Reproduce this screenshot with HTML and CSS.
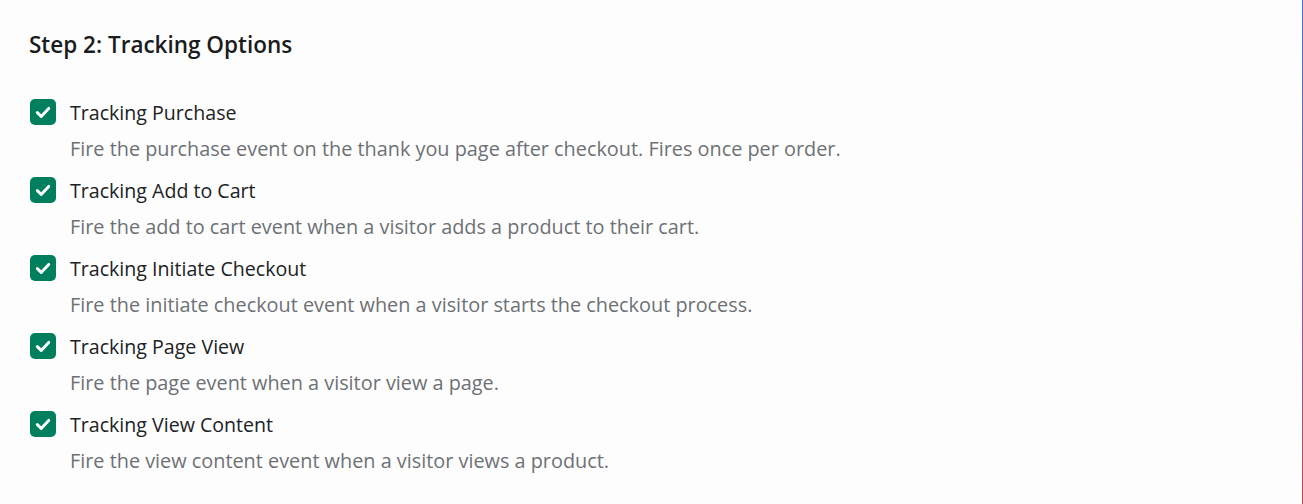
FILE: index.html
```html
<!DOCTYPE html>
<html lang="en">
<head>
<meta charset="utf-8">
<title>Tracking Options</title>
<link rel="stylesheet" href="styles.css">
</head>
<body>
<div class="page">
  <main class="content">
    <h2 class="title">Step 2: Tracking Options</h2>
    <ul class="options">
      <li class="option">
        <div class="row">
          <span class="check"><svg viewBox="0 0 26 26" width="26" height="26"><path d="M7.3 13.6l3.9 3.8 7.5-8" fill="none" stroke="#fff" stroke-width="2.9" stroke-linecap="round" stroke-linejoin="round"/></svg></span>
          <span class="label">Tracking Purchase</span>
        </div>
        <p class="desc">Fire the purchase event on the thank you page after checkout. Fires once per order.</p>
      </li>
      <li class="option">
        <div class="row">
          <span class="check"><svg viewBox="0 0 26 26" width="26" height="26"><path d="M7.3 13.6l3.9 3.8 7.5-8" fill="none" stroke="#fff" stroke-width="2.9" stroke-linecap="round" stroke-linejoin="round"/></svg></span>
          <span class="label">Tracking Add to Cart</span>
        </div>
        <p class="desc">Fire the add to cart event when a visitor adds a product to their cart.</p>
      </li>
      <li class="option">
        <div class="row">
          <span class="check"><svg viewBox="0 0 26 26" width="26" height="26"><path d="M7.3 13.6l3.9 3.8 7.5-8" fill="none" stroke="#fff" stroke-width="2.9" stroke-linecap="round" stroke-linejoin="round"/></svg></span>
          <span class="label">Tracking Initiate Checkout</span>
        </div>
        <p class="desc">Fire the initiate checkout event when a visitor starts the checkout process.</p>
      </li>
      <li class="option">
        <div class="row">
          <span class="check"><svg viewBox="0 0 26 26" width="26" height="26"><path d="M7.3 13.6l3.9 3.8 7.5-8" fill="none" stroke="#fff" stroke-width="2.9" stroke-linecap="round" stroke-linejoin="round"/></svg></span>
          <span class="label">Tracking Page View</span>
        </div>
        <p class="desc">Fire the page event when a visitor view a page.</p>
      </li>
      <li class="option">
        <div class="row">
          <span class="check"><svg viewBox="0 0 26 26" width="26" height="26"><path d="M7.3 13.6l3.9 3.8 7.5-8" fill="none" stroke="#fff" stroke-width="2.9" stroke-linecap="round" stroke-linejoin="round"/></svg></span>
          <span class="label">Tracking View Content</span>
        </div>
        <p class="desc">Fire the view content event when a visitor views a product.</p>
      </li>
    </ul>
  </main>
  <div class="edge"></div>
</div>
</body>
</html>
```
FILE: styles.css
```css
* { box-sizing: border-box; }
html, body { margin: 0; padding: 0; }
body {
  background: #fdfdfd;
  font-family: "Open Sans", "Noto Sans", sans-serif;
  color: #202223;
}
.page {
  display: flex;
  min-height: 504px;
}
.content {
  flex: 1;
  padding: 30px 0 0 29px;
}
.edge {
  width: 1px;
  background: linear-gradient(to bottom, #4d6fdc, #8a5fa8 50%, #c8455a);
}
.title {
  margin: 0;
  font-size: 22.5px;
  line-height: 30px;
  font-weight: 600;
  color: #1a1c1d;
}
.options {
  list-style: none;
  margin: 39px 0 0;
  padding: 0 0 0 1px;
  display: flex;
  flex-direction: column;
  gap: 15px;
}
.row {
  display: flex;
  align-items: flex-start;
  height: 26px;
  gap: 14px;
}
.check {
  width: 26px;
  height: 26px;
  border-radius: 5px;
  background: #007f5f;
  display: flex;
}
.label {
  font-size: 19.6px;
  line-height: 24px;
  padding-top: 2px;
  color: #202223;
}
.desc {
  margin: 11px 0 0 40px;
  font-size: 19.85px;
  line-height: 26px;
  color: #6d7175;
}
```
